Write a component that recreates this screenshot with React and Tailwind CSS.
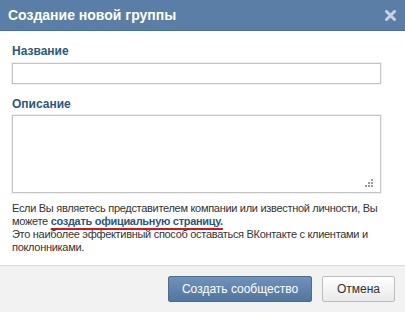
export default function App() {
  return (
    <div className="w-[405px] h-[312px] bg-white flex flex-col overflow-hidden" style={{ fontFamily: '"Liberation Sans", Arial, sans-serif' }}>
      <div className="h-[31px] bg-[#5a7ea5] border-b border-[#4b6d92] flex items-center justify-between pl-[8px] pr-[8px] shrink-0">
        <span className="text-white text-[14px] font-bold leading-none">Создание новой группы</span>
        <svg width="11" height="11" viewBox="0 0 11 11" className="mr-[1px]">
          <path d="M1.5 1.5 L9.5 9.5 M9.5 1.5 L1.5 9.5" stroke="#c5d3e3" strokeWidth="3" strokeLinecap="round" />
        </svg>
      </div>
      <div className="flex-1 px-[12px] pt-[12px]">
        <div className="text-[12px] font-bold text-[#2b587a] leading-[16px]">Название</div>
        <div className="mt-[4px] h-[21px] w-[369px] border border-[#c4c4c4] bg-white shadow-[0_0_0_1px_#f0f0f0]" />
        <div className="mt-[12px] text-[12px] font-bold text-[#2b587a] leading-[16px]">Описание</div>
        <div className="relative mt-[3px] h-[78px] w-[369px] border border-[#c4c4c4] bg-white shadow-[0_0_0_1px_#f0f0f0]">
          <svg width="9" height="9" viewBox="0 0 9 9" className="absolute right-[6px] bottom-[4px]">
            <rect x="6" y="0" width="2" height="2" fill="#9a9a9a" />
            <rect x="3" y="3" width="2" height="2" fill="#9a9a9a" />
            <rect x="6" y="3" width="2" height="2" fill="#9a9a9a" />
            <rect x="0" y="6" width="2" height="2" fill="#9a9a9a" />
            <rect x="3" y="6" width="2" height="2" fill="#9a9a9a" />
            <rect x="6" y="6" width="2" height="2" fill="#9a9a9a" />
          </svg>
        </div>
        <p className="mt-[9px] text-[11px] leading-[13px] text-[#333] tracking-[-0.3px]">
          Если Вы являетесь представителем компании или известной личности, Вы можете{' '}
          <span className="font-bold text-[#2b587a] underline decoration-[#d8141b] decoration-2 underline-offset-[3px]">создать официальную страницу.</span>
          <br />
          Это наиболее эффективный способ оставаться ВКонтакте с клиентами и поклонниками.
        </p>
      </div>
      <div className="h-[47px] shrink-0 bg-[#f2f2f2] border-t border-[#dcdcdc] flex items-center justify-end gap-[10px] pr-[10px]">
        <button className="h-[26px] w-[144px] rounded-[2px] border border-[#4a6d94] bg-gradient-to-b from-[#6e92ba] to-[#52769e] text-white text-[12px]">Создать сообщество</button>
        <button className="h-[26px] w-[73px] rounded-[2px] border border-[#bdbdbd] bg-gradient-to-b from-white to-[#e9e9e9] text-[#333] text-[12px]">Отмена</button>
      </div>
    </div>
  );
}
